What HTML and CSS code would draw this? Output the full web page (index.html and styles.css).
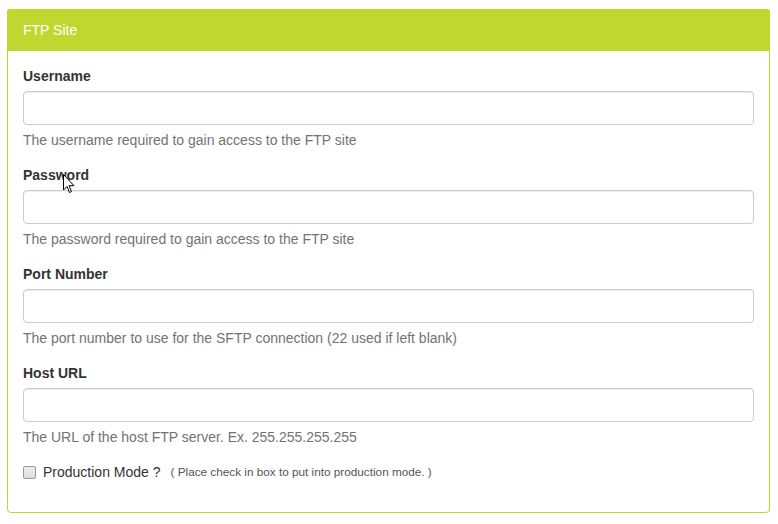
FILE: index.html
```html
<!DOCTYPE html>
<html>
<head>
<meta charset="utf-8">
<link rel="stylesheet" href="styles.css">
</head>
<body>
<div class="panel">
  <div class="panel-heading">FTP Site</div>
  <div class="panel-body">
    <div class="form-group">
      <label class="control-label">Username</label>
      <input class="form-control" type="text">
      <p class="help-block">The username required to gain access to the FTP site</p>
    </div>
    <div class="form-group pw">
      <label class="control-label">Password</label>
      <input class="form-control" type="password">
      <p class="help-block">The password required to gain access to the FTP site</p>
      <svg class="cursor" width="12" height="20" viewBox="0 0 12 20"><path d="M0.5 0.5 L0.5 16 L4 12.5 L6.5 18.5 L8.5 17.6 L6 11.7 L11 11.7 Z" fill="#fff" stroke="#000" stroke-width="1" stroke-linejoin="miter"/></svg>
    </div>
    <div class="form-group">
      <label class="control-label">Port Number</label>
      <input class="form-control" type="text">
      <p class="help-block">The port number to use for the SFTP connection (22 used if left blank)</p>
    </div>
    <div class="form-group">
      <label class="control-label">Host URL</label>
      <input class="form-control" type="text">
      <p class="help-block">The URL of the host FTP server. Ex. 255.255.255.255</p>
    </div>
    <div class="checkbox-row">
      <input class="check" type="checkbox">
      <span class="check-label">Production Mode ?</span>
      <span class="check-hint">( Place check in box to put into production mode. )</span>
    </div>
  </div>
</div>
</body>
</html>
```

FILE: styles.css
```css
html, body {
  margin: 0;
  padding: 0;
  background: #fff;
}
body {
  padding: 9px 0 0 7px;
  font-family: "Liberation Sans", Arial, sans-serif;
  font-size: 14px;
  line-height: 20px;
  color: #333;
}
.panel {
  width: 763px;
  box-sizing: border-box;
  border: 1px solid #c0d72f;
  border-radius: 4px;
  box-shadow: 0 1px 1px rgba(0,0,0,0.05);
  background: #fff;
}
.panel-heading {
  background: #c0d72f;
  color: #fff;
  border-bottom: 1px solid #c0d72f;
  border-radius: 3px 3px 0 0;
  margin: -1px -1px 0 -1px;
  padding: 11px 15px 10px 16px;
  font-size: 14px;
  line-height: 20px;
}
.panel-body {
  padding: 15px 15px 30px 15px;
}
.form-group {
  margin-bottom: 15px;
  position: relative;
}
.control-label {
  display: block;
  font-weight: bold;
  margin-bottom: 5px;
  line-height: 20px;
  color: #333;
}
.form-control {
  display: block;
  box-sizing: border-box;
  width: 731px;
  height: 34px;
  margin: 0;
  padding: 6px 12px;
  border: 1px solid #ccc;
  border-radius: 4px;
  box-shadow: inset 0 1px 1px rgba(0,0,0,0.075);
  font-family: inherit;
  font-size: 14px;
  background: #fff;
  outline: none;
}
.help-block {
  margin: 5px 0 0 0;
  color: #737373;
  line-height: 20px;
}
.cursor {
  position: absolute;
  left: 40px;
  top: 9px;
}
.checkbox-row {
  display: flex;
  align-items: center;
  height: 20px;
}
.check {
  appearance: none;
  -webkit-appearance: none;
  width: 13px;
  height: 13px;
  margin: 0 7px 0 0;
  box-sizing: border-box;
  border: 1px solid #9a9a9a;
  border-radius: 2px;
  background: linear-gradient(#ededed, #dedede);
}
.check-label {
  color: #333;
  font-size: 14px;
}
.check-hint {
  margin-left: 10px;
  font-size: 11.75px;
  color: #555;
}
```
